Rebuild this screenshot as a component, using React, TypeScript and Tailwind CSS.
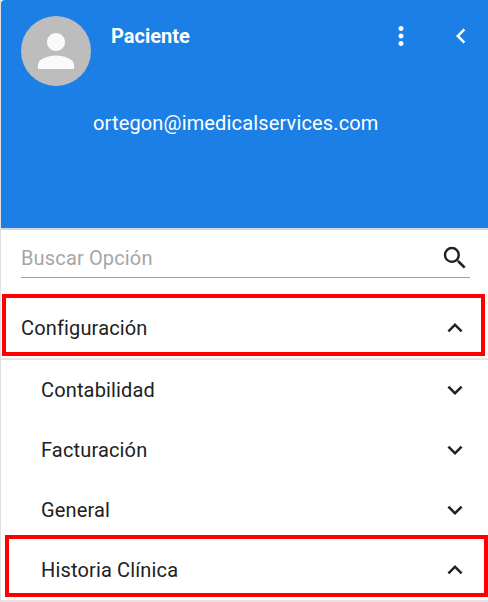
const font = { fontFamily: "Roboto, sans-serif" };

const PersonIcon = () => (
  <svg viewBox="0 0 24 24" className="w-[54px] h-[54px]" fill="#fafafa">
    <path d="M12 12c2.21 0 4-1.79 4-4s-1.79-4-4-4-4 1.79-4 4 1.79 4 4 4zm0 2c-2.67 0-8 1.34-8 4v2h16v-2c0-2.66-5.33-4-8-4z" />
  </svg>
);

const Row = ({ label, open, indent }: { label: string; open?: boolean; indent?: boolean }) => (
  <div className={`flex items-center justify-between h-[60px] pr-[18px] ${indent ? "pl-[40px]" : "pl-[20px]"}`}>
    <span className="text-[20px] tracking-[0.15px] text-[#212121]">{label}</span>
    <svg viewBox="0 0 24 24" className="w-[30px] h-[30px]" fill="#212121">
      {open ? (
        <path d="M12 8l-6 6 1.41 1.41L12 10.83l4.59 4.58L18 14z" />
      ) : (
        <path d="M16.59 8.59L12 13.17 7.41 8.59 6 10l6 6 6-6z" />
      )}
    </svg>
  </div>
);

export default function App() {
  return (
    <div style={font} className="relative w-[488px] h-[602px] overflow-hidden bg-white border-l border-[#e0e0e0]">
      <div className="h-[228px] bg-[#1b7fe6] rounded-tl-[4px] pl-[20px] pr-[12px] pt-[16px] text-white">
        <div className="flex items-start">
          <div className="w-[70px] h-[70px] rounded-full bg-[#bdbdbd] flex items-center justify-center shrink-0">
            <PersonIcon />
          </div>
          <span className="ml-[20px] mt-[7px] text-[20px] font-bold leading-[26px]">Paciente</span>
          <div className="ml-auto flex items-center mt-[5px] gap-[30px]">
            <svg viewBox="0 0 24 24" className="w-[30px] h-[30px]" fill="white">
              <path d="M12 8c1.1 0 2-.9 2-2s-.9-2-2-2-2 .9-2 2 .9 2 2 2zm0 2c-1.1 0-2 .9-2 2s.9 2 2 2 2-.9 2-2-.9-2-2-2zm0 6c-1.1 0-2 .9-2 2s.9 2 2 2 2-.9 2-2-.9-2-2-2z" />
            </svg>
            <svg viewBox="0 0 24 24" className="w-[30px] h-[30px]" fill="white">
              <path d="M15.41 7.41L14 6l-6 6 6 6 1.41-1.41L10.83 12z" />
            </svg>
          </div>
        </div>
        <div className="mt-[24px] ml-[72px] text-[20px] tracking-[0.15px] leading-[26px]">ortegon@imedicalservices.com</div>
      </div>
      <div className="h-[2px] bg-[#d8d8d8]" />

      <div className="ml-[20px] mr-[18px] h-[48px] pt-[9px] border-b border-[#9e9e9e] flex items-center justify-between">
        <span className="text-[20px] tracking-[0.15px] text-[#a6a6a6]">Buscar Opción</span>
        <svg viewBox="0 0 24 24" className="w-[30px] h-[30px] shrink-0" fill="#212121">
          <path d="M15.5 14h-.79l-.28-.27A6.471 6.471 0 0 0 16 9.5 6.5 6.5 0 1 0 9.5 16c1.61 0 3.09-.59 4.23-1.57l.27.28v.79l5 4.99L20.49 19l-4.99-5zm-6 0C7.01 14 5 11.99 5 9.5S7.01 5 9.5 5 14 7.01 14 9.5 11.99 14 9.5 14z" />
        </svg>
      </div>

      <div className="mt-[20px]">
        <Row label="Configuración" open />
        <div className="h-[2px] bg-[#e4e4e4]" />
        <Row label="Contabilidad" indent />
        <Row label="Facturación" indent />
        <Row label="General" indent />
        <Row label="Historia Clínica" open indent />
        <div className="h-[2px] bg-[#e4e4e4]" />
      </div>

      <div className="absolute left-[1px] top-[294px] w-[483px] h-[62px] border-4 border-[#ff0000]" />
      <div className="absolute left-[4px] top-[535px] w-[483px] h-[62px] border-4 border-[#ff0000]" />
    </div>
  );
}
